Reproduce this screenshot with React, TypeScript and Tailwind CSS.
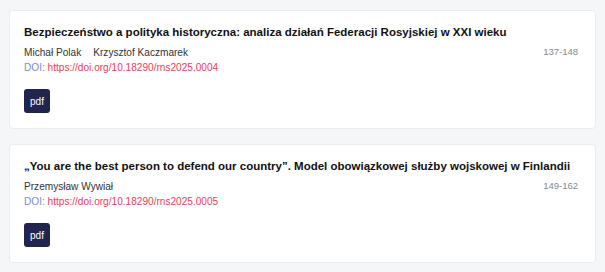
import React from 'react';

interface Article {
    title: string;
    authors: string[];
    doi: string;
    pages: string;
}

const articles: Article[] = [
    {
        title: 'Bezpieczeństwo a polityka historyczna: analiza działań Federacji Rosyjskiej w XXI wieku',
        authors: ['Michał Polak', 'Krzysztof Kaczmarek'],
        doi: 'https://doi.org/10.18290/rns2025.0004',
        pages: '137-148',
    },
    {
        title: '„You are the best person to defend our country”. Model obowiązkowej służby wojskowej w Finlandii',
        authors: ['Przemysław Wywiał'],
        doi: 'https://doi.org/10.18290/rns2025.0005',
        pages: '149-162',
    },
];

const ArticleCard: React.FC<{ article: Article }> = ({ article }) => {
    return (
        <div className="bg-white border border-[#eaecef] rounded-[4px] pl-[14px] pr-[17px] pt-[13px] pb-[15px]">
            <h3 className="text-[11.5px] leading-[17px] font-bold text-[#111]">{article.title}</h3>
            <div className="flex justify-between items-center mt-[4px]">
                <div className="flex gap-[12px] text-[10.1px] leading-[15px] text-[#333]">
                    {article.authors.map(a => (
                        <span key={a}>{a}</span>
                    ))}
                </div>
                <span className="text-[9.5px] text-[#888]">{article.pages}</span>
            </div>
            <div className="text-[10.1px] leading-[15px]">
                <span className="text-[#7d8fc9]">DOI: </span>
                <a href="#" className="text-[#e8425c]">{article.doi}</a>
            </div>
            <button className="mt-[14px] w-[26px] h-[24px] bg-[#20244f] text-white text-[10px] rounded-[3px] flex items-center justify-center">
                pdf
            </button>
        </div>
    );
};

export default function App() {
    return (
        <div className="min-h-[272px] bg-[#f5f6f8] px-[9px] pt-[10px] pb-[9px] flex flex-col gap-[15px] font-['Liberation_Sans',Arial,sans-serif]">
            {articles.map(a => (
                <ArticleCard key={a.doi} article={a} />
            ))}
        </div>
    );
}
